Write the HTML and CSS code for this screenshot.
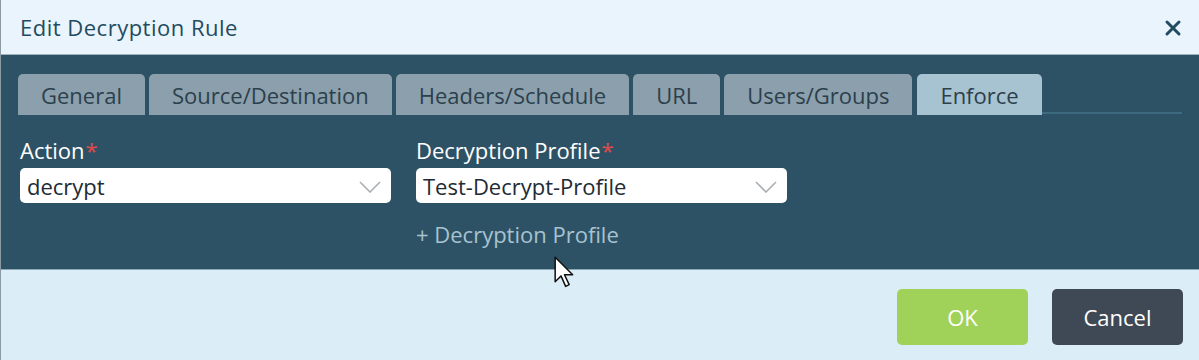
FILE: index.html
```html
<!DOCTYPE html>
<html lang="en">

<head>
    <meta charset="UTF-8">
    <title>Edit Decryption Rule</title>
    <link rel="stylesheet" href="styles.css">
</head>

<body>
    <div class="dialog">
        <div class="dialog-header">
            <div class="dialog-title">Edit Decryption Rule</div>
            <svg class="close" width="18" height="18" viewBox="0 0 18 18">
                <path d="M3 3 L15 15 M15 3 L3 15" stroke="#234b60" stroke-width="3" stroke-linecap="round" />
            </svg>
        </div>

        <div class="dialog-body">
            <div class="tabs">
                <div class="tab">General</div>
                <div class="tab">Source/Destination</div>
                <div class="tab">Headers/Schedule</div>
                <div class="tab">URL</div>
                <div class="tab">Users/Groups</div>
                <div class="tab active">Enforce</div>
                <div class="tab-line"></div>
            </div>

            <div class="fields">
                <div class="field">
                    <div class="label">Action<span class="req">*</span></div>
                    <div class="select">
                        <span>decrypt</span>
                        <svg width="22" height="12" viewBox="0 0 22 12">
                            <path d="M1 1 L11 11 L21 1" fill="none" stroke="#aab0b4" stroke-width="1.6" />
                        </svg>
                    </div>
                </div>
                <div class="field">
                    <div class="label">Decryption Profile<span class="req">*</span></div>
                    <div class="select">
                        <span>Test-Decrypt-Profile</span>
                        <svg width="22" height="12" viewBox="0 0 22 12">
                            <path d="M1 1 L11 11 L21 1" fill="none" stroke="#aab0b4" stroke-width="1.6" />
                        </svg>
                    </div>
                    <div class="add-link">+ Decryption Profile</div>
                </div>
            </div>

            <svg class="cursor" width="21" height="34" viewBox="0 0 18 29">
                <path d="M1 1 L1 22 L6 17 L10 26 L13 24.5 L9 16 L16 16 Z" fill="#fff" stroke="#111" stroke-width="1.3" stroke-linejoin="round" />
            </svg>
        </div>

        <div class="dialog-footer">
            <button class="btn btn-ok">OK</button>
            <button class="btn btn-cancel">Cancel</button>
        </div>
    </div>
</body>

</html>
```

FILE: styles.css
```css
body {
    margin: 0;
    padding: 0;
    font-family: "Open Sans", "Noto Sans", sans-serif;
    background-color: #dbedf7;
}

.dialog {
    width: 1199px;
    height: 360px;
    display: flex;
    flex-direction: column;
    border-left: 1px solid #8c9aa3;
    box-sizing: border-box;
}

/* ------------------Header------------------- */
.dialog-header {
    height: 55px;
    background-color: #eaf4fc;
    display: flex;
    align-items: center;
    justify-content: space-between;
    padding: 0 17px 0 19px;
    border-bottom: 1px solid #9fb3bf;
    box-sizing: border-box;
}

.dialog-title {
    font-size: 22px;
    color: #234b60;
    letter-spacing: 0.5px;
}

.close {
    margin-top: 1px;
}

/* ------------------Body------------------- */
.dialog-body {
    position: relative;
    height: 214px;
    background-color: #2e5265;
    padding: 19px 17px 0 17px;
    box-sizing: border-box;
}

.tabs {
    display: flex;
    align-items: flex-end;
    gap: 4px;
    height: 41px;
}

.tab {
    height: 41px;
    padding: 0 23px;
    background-color: #8ba0ac;
    color: #2c3f4c;
    font-size: 22px;
    line-height: 43px;
    border-radius: 5px 5px 0 0;
    box-sizing: border-box;
}

.tab.active {
    background-color: #a7c3d1;
    margin-left: 1px;
}

.tab-line {
    flex: 1;
    height: 2px;
    margin-left: -4px;
    margin-bottom: 1px;
    background-color: #3d6a7e;
}

.fields {
    display: flex;
    gap: 25px;
    padding: 22px 0 0 2px;
}

.field {
    width: 371px;
}

.label {
    color: #fff;
    font-size: 22px;
    line-height: 26px;
}

.req {
    color: #e24a4a;
    margin-left: 1px;
}

.select {
    margin-top: 5px;
    height: 35px;
    background-color: #fff;
    border-radius: 5px;
    display: flex;
    align-items: center;
    justify-content: space-between;
    padding: 0 10px 0 7px;
    font-size: 22px;
    color: #222b33;
    box-sizing: border-box;
}

.select svg {
    margin-top: 2px;
}

.add-link {
    margin-top: 18px;
    color: #a7c3d1;
    font-size: 22px;
    line-height: 26px;
}

.cursor {
    position: absolute;
    left: 553px;
    top: 201px;
}

/* ------------------Footer------------------- */
.dialog-footer {
    flex: 1;
    display: flex;
    justify-content: flex-end;
    align-items: flex-start;
    gap: 24px;
    padding: 19px 16px 0 0;
    border-top: 1px solid #8aa8b8;
}

.btn {
    width: 131px;
    height: 56px;
    border: none;
    border-radius: 5px;
    color: #fff;
    font-family: "Open Sans", "Noto Sans", sans-serif;
    font-size: 22px;
}

.btn-ok {
    background-color: #a0d25a;
}

.btn-cancel {
    background-color: #3f4955;
}
```
